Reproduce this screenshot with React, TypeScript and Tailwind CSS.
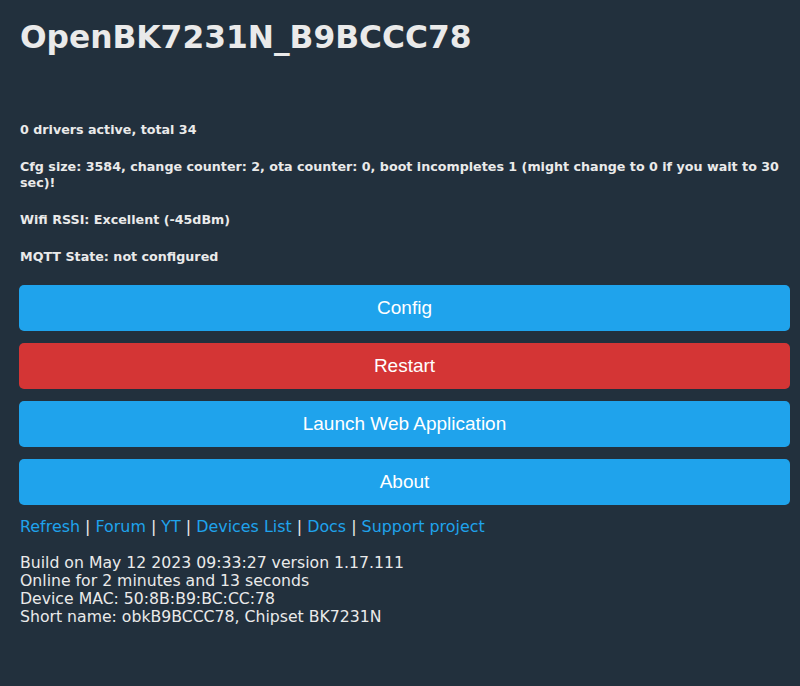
import React from 'react'

const info = [
  '0 drivers active, total 34',
  'Cfg size: 3584, change counter: 2, ota counter: 0, boot incompletes 1 (might change to 0 if you wait to 30 sec)!',
  'Wifi RSSI: Excellent (-45dBm)',
  'MQTT State: not configured',
]

const buttons = [
  { label: 'Config', red: false },
  { label: 'Restart', red: true },
  { label: 'Launch Web Application', red: false },
  { label: 'About', red: false },
]

const links = ['Refresh', 'Forum', 'YT', 'Devices List', 'Docs', 'Support project']

export default function App() {
  return (
    <div className="min-h-screen bg-[#22303d] pl-[19px] pr-[10px] pt-[19px] text-[#eaeaea] font-['DejaVu_Sans',Verdana,sans-serif]">
      <h1 className="pl-px text-[31.3px] leading-[36px] font-bold">OpenBK7231N_B9BCCC78</h1>

      {/* Status lines */}
      <div className="mt-[67px] flex flex-col gap-[21px]">
        {info.map((t) => (
          <h5 key={t} className="pl-px text-[12.7px] leading-[16px] font-bold">
            {t}
          </h5>
        ))}
      </div>

      {/* Actions */}
      <div className="mt-[20px] flex flex-col gap-[12px]">
        {buttons.map((b) => (
          <button
            key={b.label}
            className={`h-[46px] w-full rounded-[5px] text-[19px] text-white font-['Liberation_Sans',Arial,sans-serif] ${
              b.red ? 'bg-[#d43535]' : 'bg-[#1fa3ec]'
            }`}
          >
            {b.label}
          </button>
        ))}
      </div>

      <div className="mt-[13px] pl-px text-[15.9px] leading-[18px]">
        {links.map((l, i) => (
          <span key={l}>
            {i > 0 && ' | '}
            <a href="#" className="text-[#1fa3ec]">
              {l}
            </a>
          </span>
        ))}
      </div>

      <div className="mt-[18px] pl-px text-[15.7px] leading-[18px]">
        <div>Build on May 12 2023 09:33:27 version 1.17.111</div>
        <div>Online for 2 minutes and 13 seconds</div>
        <div>Device MAC: 50:8B:B9:BC:CC:78</div>
        <div>Short name: obkB9BCCC78, Chipset BK7231N</div>
      </div>
    </div>
  )
}
